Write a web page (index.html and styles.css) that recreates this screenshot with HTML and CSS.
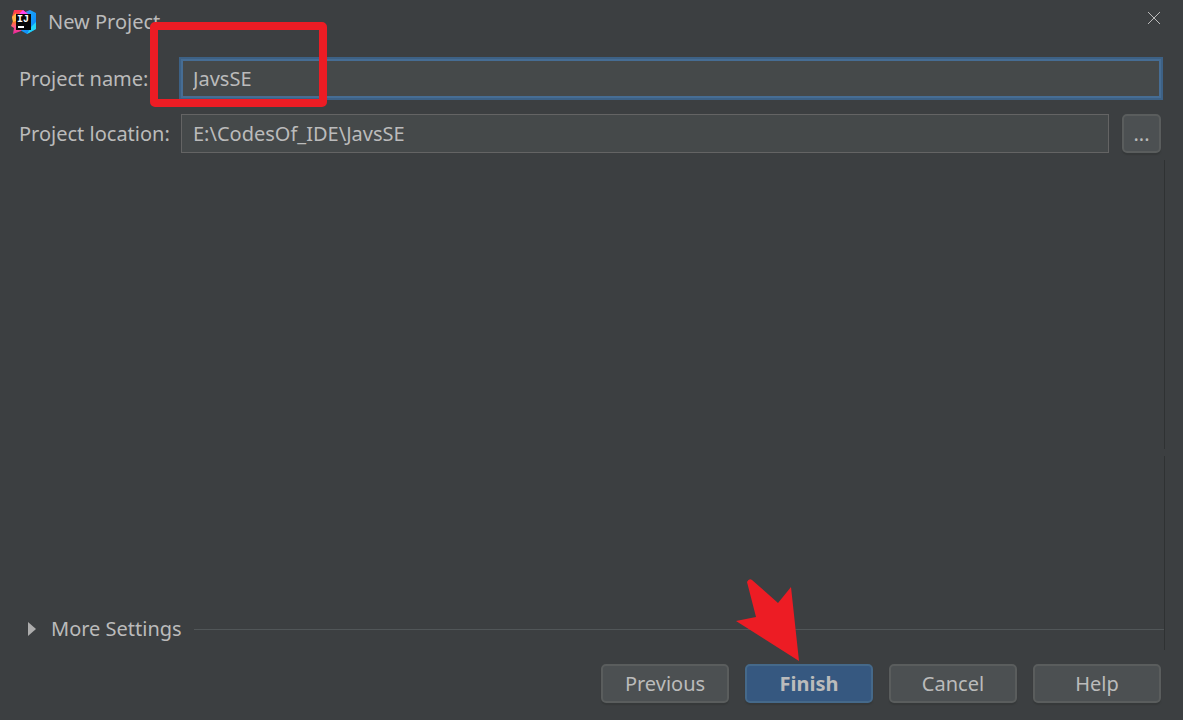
FILE: index.html
```html
<!DOCTYPE html>
<html lang="en">

<head>
    <meta charset="UTF-8">
    <meta name="viewport" content="width=device-width, initial-scale=1.0">
    <title>New Project</title>
    <link rel="stylesheet" href="styles.css">
</head>

<body>
    <form class="dialog">
        <header class="titlebar">
            <svg class="logo" viewBox="0 0 26 26" aria-hidden="true">
                <defs>
                    <linearGradient id="warm" x1="0" y1="0" x2="0" y2="1">
                        <stop offset="0" stop-color="#fe315d" />
                        <stop offset="0.45" stop-color="#f97a12" />
                        <stop offset="0.7" stop-color="#ff5a8a" />
                        <stop offset="1" stop-color="#e8209c" />
                    </linearGradient>
                    <linearGradient id="cool" x1="0" y1="0" x2="1" y2="1">
                        <stop offset="0" stop-color="#8a5be8" />
                        <stop offset="0.4" stop-color="#18a0f8" />
                        <stop offset="1" stop-color="#087cfa" />
                    </linearGradient>
                </defs>
                <path fill="url(#cool)" d="M12 4 19 1l6 3v16l-9 5-7-4z" />
                <path fill="#22d3f5" d="M20 18l5-5v7l-9 5z" />
                <path fill="url(#warm)" d="M3 1h9l4 4-6 17-8 3 1-6-3-2 2-5-1-4z" />
                <path fill="#ffb347" d="M1 8l4-4v8l-3 1z" />
                <path fill="#ff45ed" d="M12 1l5 4H8z" />
                <path fill="#070707" d="M5 5h15v16H5z" />
                <text class="logo-text" x="6" y="13">IJ</text>
                <path fill="#fff" d="M7 17h6v2H7z" />
            </svg>
            <h1 class="title">New Project</h1>
            <button class="close" type="button" aria-label="Close">
                <svg viewBox="0 0 12 12" aria-hidden="true">
                    <path d="M0 0l12 12M12 0L0 12" />
                </svg>
            </button>
        </header>

        <div class="fields">
            <label for="name">Project name:</label>
            <div class="field">
                <input class="input focused" id="name" type="text" value="JavsSE" spellcheck="false">
                <span class="mark-box"></span>
            </div>
            <label for="location">Project location:</label>
            <div class="field">
                <input class="input" id="location" type="text" value="E:\CodesOf_IDE\JavsSE" spellcheck="false">
                <button class="btn browse" type="button" aria-label="Browse">...</button>
            </div>
        </div>

        <div class="panel panel-main"></div>
        <div class="panel panel-more">
            <button class="more" type="button">
                <svg viewBox="0 0 8 14" aria-hidden="true">
                    <path d="M0 0l8 7-8 7z" />
                </svg>
                More Settings
            </button>
            <span class="line"></span>
        </div>

        <footer class="actions">
            <button class="btn" type="button">Previous</button>
            <button class="btn primary" type="submit">Finish
                <svg class="mark-arrow" viewBox="0 0 64 84" aria-hidden="true">
                    <path d="M11 3Q13-1 16 1L42 24 55 8 63 82 0 42 20 38z" />
                </svg>
            </button>
            <button class="btn" type="button">Cancel</button>
            <button class="btn" type="button">Help</button>
        </footer>
    </form>
</body>

</html>
```

FILE: styles.css
```css
* {
    box-sizing: border-box;
}

body {
    margin: 0;
    background-color: #3c3f41;
    color: #bbbbbb;
    font-family: "Noto Sans", "Open Sans", sans-serif;
    font-size: 20px;
    line-height: 28px;
}

button,
input {
    font: inherit;
    color: inherit;
}

.dialog {
    display: flex;
    flex-direction: column;
    min-height: 100vh;
}


.titlebar {
    display: flex;
    align-items: center;
    height: 43px;
    padding: 0 22px 0 11px;
}

.logo {
    width: 26px;
    height: 26px;
    margin-right: 11px;
}

.logo-text {
    fill: #ffffff;
    font-family: "Liberation Mono", monospace;
    font-size: 10px;
    font-weight: 700;
}

.title {
    flex: 1;
    margin: 0;
    font-size: 20px;
    font-weight: 400;
}

.close {
    display: flex;
    align-self: flex-start;
    padding: 12px 1px;
    border: 0;
    background: none;
}

.close svg {
    width: 12px;
    height: 12px;
    fill: none;
    stroke: #bbbbbb;
    overflow: visible;
}


.fields {
    display: grid;
    grid-template-columns: 162px 1fr;
    row-gap: 16px;
    align-items: center;
    padding: 16px 22px 0 19px;
}

.fields label {
    white-space: nowrap;
}

.field {
    position: relative;
    display: flex;
    gap: 13px;
}

.input {
    flex: 1;
    min-width: 0;
    height: 39px;
    padding: 0 11px;
    border: 1px solid #646464;
    outline: 0;
    background-color: #45494a;
}

.input.focused {
    padding: 0 10px;
    border: 2px solid #466d94;
    box-shadow: 0 0 0 2px #3d6185;
}


.btn {
    position: relative;
    width: 128px;
    height: 39px;
    padding: 0;
    border: 2px solid #5a5d5d;
    border-radius: 5px;
    background-color: #4c5052;
    box-shadow: 0 2px 1px #36393a;
}

.btn.browse {
    width: 39px;
}

.btn.primary {
    border-color: #45698a;
    background-color: #365880;
    font-weight: 700;
}


.panel {
    margin-right: 18px;
    border-right: 1px solid #2f3233;
}

.panel-main {
    flex: 1;
    margin-top: 7px;
}

.panel-more {
    display: flex;
    align-items: flex-end;
    height: 194px;
    margin-top: 7px;
    padding: 0 0 7px 28px;
}

.more {
    display: flex;
    align-items: center;
    gap: 15px;
    padding: 0;
    border: 0;
    background: none;
}

.more svg {
    width: 8px;
    height: 14px;
    fill: #adadad;
}

.line {
    flex: 1;
    height: 1px;
    margin: 0 0 13px 12px;
    background-color: #515658;
}


.actions {
    display: flex;
    justify-content: flex-end;
    gap: 16px;
    padding: 14px 22px 17px;
}


/* red annotations over the dialog */
.mark-box {
    position: absolute;
    top: -37px;
    left: -31px;
    width: 177px;
    height: 85px;
    border: 8px solid #ed1c24;
    border-radius: 5px;
    pointer-events: none;
}

.mark-arrow {
    position: absolute;
    left: -11px;
    bottom: 38px;
    width: 64px;
    height: 84px;
    fill: #ed1c24;
    pointer-events: none;
}
```
